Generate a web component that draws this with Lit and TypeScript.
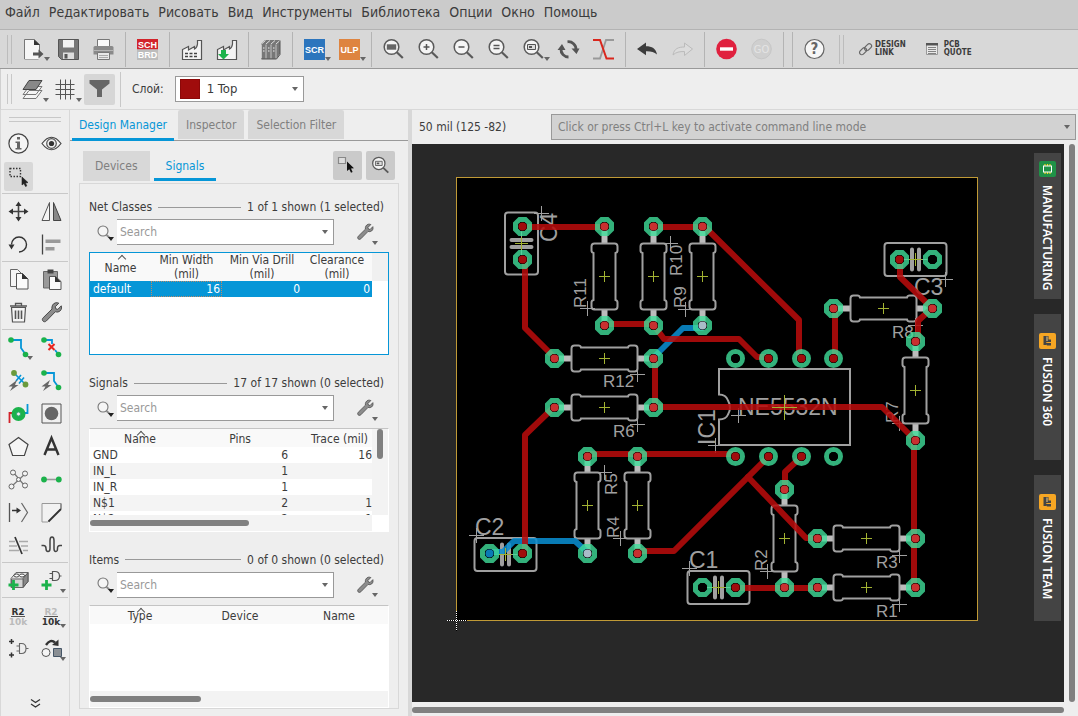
import { LitElement, html, svg, css, nothing, TemplateResult } from "lit";
import { customElement, property, state } from "lit/decorators.js";
import { classMap } from "lit/directives/class-map.js";

const GREEN = "#1bb24b";
const BLUE = "#0696d7";

const lens = (inner: TemplateResult | typeof nothing) => svg`
  <circle cx="10.5" cy="10" r="7.3" fill="#f4f4f4" stroke="#5a5a5a" stroke-width="1.5"/>
  <path d="M15.8 15.3l6 5.7" stroke="#5a5a5a" stroke-width="2.2"/>${inner}`;

const factory = svg`<path d="M3.500 22.500V12.500l6-3v3.500l6-3.500v2.500q2.500-1 3-5V3.500h4v19z" fill="#f4f4f4" stroke="#555" stroke-width="1.200"/>`;

const fWrench = svg`<path d="M19.800 3.200l-3.600 3.600.6 2 2 .6 3.500-3.600c.9 3-.6 5.600-3.300 6.200-.9.200-1.800 0-2.600-.3L7.300 21c-1 1-2.400 1-3.300.1s-.9-2.300.1-3.300L13 9c-.5-2.600.8-5.600 3.600-6.200 1.200-.2 2.200-.1 3.200.4z" fill="#8c8c8c" stroke="#4a4a4a" stroke-width="1"/>`;

const ICONS: Record<string, TemplateResult> = {
  open: svg`<path d="M3.500 2.500h10l5 5v10M3.500 2.500v19.500h14v-2" fill="none" stroke="#777"/><path d="M4 3h9.500l4.500 4.500V22H4z" fill="#f6f6f6"/><path d="M13 2.500v5.500h6z" fill="#333"/><path d="M12 15.500h5.500v-3l5 4.500-5 4.500v-3H12z" fill="#555"/>`,
  save: svg`<path d="M2.500 2.500h20v20h-17l-3-3z" fill="#777" stroke="#555"/><path d="M7 3h11v7.500H7z" fill="#f2f2f2"/><path d="M7 15.500h11v6.500H7z" fill="#ddd"/><path d="M8.500 17h3v4.500h-3z" fill="#555"/>`,
  print: svg`<path d="M6.500 2.500h12v8h-12z" fill="#fafafa" stroke="#777"/><path d="M2.500 10.500q0-1.500 1.500-1.500h17q1.500 0 1.500 1.500v7h-20z" fill="#8a8a8a"/><path d="M3 13.500h19" stroke="#b5b5b5"/><path d="M6.500 15.500h12v7h-12z" fill="#e8e8e8" stroke="#777"/><path d="M8 18.500h9M8 20.500h9" stroke="#aaa"/>`,
  schbrd: svg`<path d="M2 2h21v10.500H2z" fill="#d2232a"/><path d="M2 12.500h21V23H2z" fill="#bdbdbd"/><text x="12.500" y="10.800" text-anchor="middle" class="ib" fill="#fff">SCH</text><text x="12.500" y="21.300" text-anchor="middle" class="ib" fill="#fff">BRD</text>`,
  cam: svg`${factory}<path d="M6 16.500h12M6 19.500h12" stroke="#444" stroke-width="1.300" stroke-dasharray="3 1.500"/>`,
  camdown: svg`${factory}<path d="M7 13h5v4h3l-5.500 5.500L4 17h3z" fill="${GREEN}"/>`,
  library: svg`<path d="M3 7l4-4h15v14l-4 5H3z" fill="#777"/><path d="M3.500 7l4-3.500M8 7l4-3.500M13 7l4-3.500M18 7l4-3.500" stroke="#ddd"/><path d="M3.500 7.500v14M8 7.500v14M13 7.500v14M18 7.500v14" stroke="#c4c4c4"/><path d="M5 11h1.500M10 11h1.500M15 11h1.500M5 14h1.500M10 14h1.500M15 14h1.500" stroke="#eee"/><path d="M3.500 22h15l3.500-4.500V3.500" fill="none" stroke="#555"/>`,
  scr: svg`<path d="M2 2h21v21H2z" fill="#2c75bd"/><text x="12.500" y="16" text-anchor="middle" class="ib" fill="#fff">SCR</text>`,
  ulp: svg`<path d="M2 2h21v21H2z" fill="#de8440"/><text x="12.500" y="16" text-anchor="middle" class="ib" fill="#fff">ULP</text>`,
  zoomfit: lens(svg`<path d="M5.800 7.300h9.400v5.400H5.800z" fill="#666"/>`),
  zoomin: lens(svg`<path d="M7.500 10h6M10.500 7v6" stroke="#555" stroke-width="1.500"/>`),
  zoomout: lens(svg`<path d="M7.500 10h6" stroke="#555" stroke-width="1.500"/>`),
  zoomeq: lens(svg`<path d="M7.500 8.500h6M7.500 11.500h6" stroke="#555" stroke-width="1.400"/>`),
  zoomsel: lens(svg`<path d="M6.500 7.500h8v5h-8z" fill="#ddd" stroke="#555"/><path d="M8 9h3v2H8z" fill="#555"/>`),
  refresh: svg`<path d="M11.500 4.800A7.500 7.500 0 0 1 20 12.500M12.500 20A7.500 7.500 0 0 1 5 12" fill="none" stroke="#555" stroke-width="2.800"/><path d="M15.500 11.500h8l-3 5.500zM1.500 13h8L6 7z" fill="#555"/>`,
  airwire: svg`<path d="M2 21.500h7L15 3h8" fill="none" stroke="#999" stroke-width="1.800"/><path d="M2 3h7l6.500 18.500H23" fill="none" stroke="#d9261c" stroke-width="2"/>`,
  undo: svg`<path d="M2 12l9-6.500v3.800c6 0 9.800 2 11 8.200-3-2.700-6-3.300-11-3.200v4z" fill="#3c3c3c"/>`,
  redo: svg`<path d="M22.500 12l-8-6v4c-6 0-10.500 1.500-11.500 8 3-3 6.500-3.500 11.500-3.500v4z" fill="#dcdcdc" stroke="#bbb"/>`,
  stop: svg`<circle cx="12.500" cy="12" r="10.300" fill="#e0213f"/><path d="M6 12h13" stroke="#fff" stroke-width="3.400"/>`,
  go: svg`<circle cx="12.500" cy="12" r="9.800" fill="#cfcfcf" stroke="#c6c6c6"/><text x="12.500" y="16" text-anchor="middle" class="ig" fill="#e4e4e4">GO</text>`,
  help: svg`<circle cx="12.500" cy="12" r="9.500" fill="#f6f6f6" stroke="#666" stroke-width="1.200"/><text x="12.500" y="17.200" text-anchor="middle" class="iq" fill="#666">?</text>`,
  layers: svg`<path d="M9 13.500h13l-6 8H3zM9 9.500h13l-6 8H3z" fill="#f4f4f4" stroke="#777"/><path d="M9 3.500h13l-6 9H3z" fill="#888" stroke="#444"/>`,
  grid: svg`<path d="M2.500 7.500h19M2.500 12.500h19M2.500 17.500h19M7.500 2.500v20M12.500 2.500v20M17.500 2.500v20" stroke="#555" stroke-width="1"/>`,
  filter: svg`<path d="M2.500 3h20v3.500l-7.500 6V20h-5v-7.500l-7.500-6z" fill="#666"/>`,
  info: svg`<circle cx="12.500" cy="12.500" r="9.600" fill="#f5f5f5" stroke="#444" stroke-width="1.200"/><path d="M11 6h3v2.500h-3zM9.500 10.500H14v6.500h1.500v1.500H9.500V17H11v-5H9.500z" fill="#666"/>`,
  eye: svg`<path d="M3 12.500q9.500-12.500 19 0q-9.500 12.500-19 0z" fill="#f5f5f5" stroke="#444" stroke-width="1.200"/><circle cx="12.500" cy="12.500" r="4.800" fill="#eee" stroke="#555" stroke-width="1.200"/><circle cx="12.500" cy="12.500" r="2.600" fill="#333"/>`,
  group: svg`<path d="M4 4.500h10.500v8H4z" fill="none" stroke="#333" stroke-width="1.400" stroke-dasharray="1.500 1.500"/><path d="M16 13v8l2-1.500 1.500 3 1.300-.6-1.300-3 2.500-.3z" fill="#222" stroke="#222" stroke-width=".6"/>`,
  move: svg`<path d="M12.500 5v15M5 12.500h15" stroke="#444" stroke-width="1.600"/><path d="M12.500 2.500l3 4.500h-6zM12.500 22.500l3-4.500h-6zM2.500 12.500L7 9.500v6zM22.500 12.500L18 9.500v6z" fill="#333"/>`,
  mirror: svg`<path d="M10.500 3.500v18h-7.500z" fill="#f5f5f5" stroke="#555"/><path d="M14.500 3.500v18h7.500z" fill="#888" stroke="#444"/>`,
  rotate: svg`<path d="M5.500 12.500A7.500 7.500 0 1 1 13 20" fill="none" stroke="#333" stroke-width="1.400"/><path d="M2.500 12.500h6l-3 5z" fill="#333"/>`,
  align: svg`<path d="M3.500 2.500v20" stroke="#444" stroke-width="1.300"/><path d="M6.500 7.500h15v3.500h-15zM6.500 15h9v3.500h-9z" fill="#999"/>`,
  copy: svg`<path d="M4.500 2.500h7l5 5v12h-12z" fill="#f5f5f5" stroke="#666"/><path d="M10.500 6.500h6l5.500 5.500v10H10.500z" fill="#fafafa" stroke="#555"/><path d="M16 6l6 6h-6z" fill="#333"/>`,
  paste: svg`<path d="M4.500 4.500h14v16.500h-14z" fill="#999" stroke="#666"/><path d="M8.500 2.500h6v4h-6z" fill="#444"/><path d="M10.500 9.500h6l5.500 5v8H10.500z" fill="#fafafa" stroke="#555"/><path d="M16 9l6 6h-6z" fill="#333"/>`,
  trash: svg`<path d="M5.500 7.500h14l-1 14.500h-12z" fill="#f5f5f5" stroke="#555" stroke-width="1.200"/><path d="M4 6h17M9.500 5.500v-2h6v2" fill="none" stroke="#555" stroke-width="1.300"/><path d="M9.500 10.500v8.500M12.500 10.500v8.500M15.500 10.500v8.500" stroke="#555" stroke-width="1.600"/>`,
  wrench: fWrench,
  route: svg`<path d="M5 5h10v8l5 7" fill="none" stroke="${BLUE}" stroke-width="1.800"/><circle cx="5" cy="5" r="2.800" fill="${GREEN}"/><circle cx="19.500" cy="19.500" r="2.800" fill="${GREEN}"/>`,
  ripup: svg`<path d="M5 5h8v4M16 15l4 5" fill="none" stroke="${BLUE}" stroke-width="1.800"/><circle cx="5" cy="5" r="2.800" fill="${GREEN}"/><circle cx="19.500" cy="19.500" r="2.800" fill="${GREEN}"/><path d="M9.500 9l6 6M15.500 9l-6 6" stroke="#e8251f" stroke-width="2"/>`,
  quick: svg`<path d="M8 5l12 12" stroke="${BLUE}" stroke-width="1.600"/><path d="M10 13l5-6M13 15.500l5-6" stroke="${BLUE}" stroke-width="1.600"/><circle cx="8" cy="5" r="2.900" fill="#6a9a3c"/><circle cx="19.500" cy="16.500" r="2.900" fill="#6a9a3c"/><path d="M11 12l-8.500 6.500h4L4 23l8.500-6H9z" fill="#666"/>`,
  autor: svg`<path d="M5 5h10v8l5 7" fill="none" stroke="${BLUE}" stroke-width="1.800"/><circle cx="5" cy="5" r="2.800" fill="${GREEN}"/><circle cx="19.500" cy="19.500" r="2.800" fill="${GREEN}"/><path d="M11 12l-8.500 6.500h4L4 23l8.500-6H9z" fill="#666"/>`,
  via: svg`<path d="M3.500 22v-10h4" fill="none" stroke="#d2232a" stroke-width="1.800"/><path d="M21.500 3v9h-4" fill="none" stroke="${BLUE}" stroke-width="1.800"/><circle cx="12.500" cy="13" r="7" fill="${GREEN}"/><circle cx="12.500" cy="13" r="2" fill="#eee" stroke="#3a7"/>`,
  pad: svg`<path d="M3 3h19v19H3z" fill="#f0f0f0" stroke="#555"/><circle cx="12.500" cy="12.500" r="6.800" fill="#666"/>`,
  polygon: svg`<path d="M12.500 3.500l9.500 7-3.600 11H6.600L3 10.500z" fill="#f5f5f5" stroke="#444" stroke-width="1.200"/>`,
  text: svg`<path d="M5.500 21L12.500 4l7 17M8 15.500h9" fill="none" stroke="#333" stroke-width="2.400"/>`,
  ratsnest: svg`<path d="M7 5l11 13M19 7L6 19" stroke="#777" stroke-width="1.200"/><g fill="#f2f2f2" stroke="#666"><circle cx="7" cy="5.500" r="2.500"/><circle cx="19" cy="6.500" r="2.500"/><circle cx="5.500" cy="19.500" r="2.500"/><circle cx="19" cy="18.500" r="2.500"/><circle cx="12.500" cy="12.500" r="2"/></g>`,
  signal: svg`<path d="M5 12.500h15" stroke="#999" stroke-width="1.600"/><circle cx="5" cy="12.500" r="2.900" fill="${GREEN}"/><circle cx="19.800" cy="12.500" r="2.900" fill="${GREEN}"/>`,
  split: svg`<path d="M3.500 3v19" stroke="#555" stroke-width="1.300"/><path d="M15.500 3l6 9.500-6 9.500" fill="none" stroke="#666" stroke-width="1.200"/><path d="M6 10.500h6" stroke="#333" stroke-width="1.500"/><path d="M10.500 7.500l4.500 3-4.500 3z" fill="#333"/>`,
  miter: svg`<path d="M3 3.500h19v5l-13 13.500H3z" fill="#f2f2f2" stroke="#999"/><path d="M22 9L9.500 21.500" stroke="#333" stroke-width="1.800"/><path d="M22 9V3.500" stroke="#666"/>`,
  slice: svg`<path d="M3 8.500h6M13 8.500h9M3 13h8M15 13h7M3 17.500h10M17 17.500h5" stroke="#aaa" stroke-width="1.400"/><path d="M9 4l7 17" stroke="#333" stroke-width="1.700"/>`,
  meander: svg`<path d="M2.500 12.500h2q2.500 0 2.500 3t2 3 2-3V7.500q0-3.500 2-3.500t2 3.500v8q0 3 1.800 3t1.700-3 2.500-3h2" fill="none" stroke="#444" stroke-width="1.500"/>`,
  addpart: svg`<path d="M5 10.500l5-6h12v9l-5 6H5z" fill="#e4e4e4" stroke="#666"/><path d="M17 10.500l5-6v9l-5 6z" fill="#888" stroke="#555"/><path d="M5.500 11H17v8.500H5.500z" fill="#d4d4d4" stroke="#666"/><ellipse cx="10.500" cy="7.500" rx="2.500" ry="1.500" fill="#fff" stroke="#444"/><ellipse cx="16" cy="7.500" rx="2.500" ry="1.500" fill="#fff" stroke="#444"/><path d="M7.500 12v10M2.500 17h10" stroke="${GREEN}" stroke-width="2.800"/>`,
  addgate: svg`<path d="M13.500 3.500h2.500c3 0 4.500 2 4.500 4.500s-1.500 4.500-4.500 4.500h-2.500zM10.500 5.500h3M10.500 10.500h3M20.500 8h2" fill="none" stroke="#555" stroke-width="1.200"/><path d="M7.500 12v10M2.500 17h10" stroke="${GREEN}" stroke-width="2.800"/>`,
  name: svg`<text x="12" y="11.500" text-anchor="middle" class="ir" fill="#333">R2</text><path d="M5 13.500h14" stroke="#555"/><text x="12" y="22" text-anchor="middle" class="ir" fill="#bbb">10k</text>`,
  value: svg`<text x="12" y="11.500" text-anchor="middle" class="ir" fill="#bbb">R2</text><path d="M5 13.500h14" stroke="#555"/><text x="12" y="22" text-anchor="middle" class="ir" fill="#333">10k</text>`,
  invoke: svg`<path d="M5.500 3v5M3 5.500h5M5.500 16.500v5M3 19h5" stroke="#333" stroke-width="1.500"/><path d="M13.500 7.500h2c3 0 4.500 2 4.500 5s-1.500 5-4.500 5h-2zM10.500 10h3M10.500 15h3M20 12.500h2.500" fill="none" stroke="#666" stroke-width="1.100"/>`,
  replace: svg`<path d="M7 9q4.500-6.500 9-2.500" fill="none" stroke="#333" stroke-width="2.400"/><path d="M13 9l6.500 1V3.500z" fill="#333"/><circle cx="7" cy="16.500" r="4" fill="#f5f5f5" stroke="#555"/><path d="M14.500 12.500h8v8h-8z" fill="#8a8f94" stroke="#456"/>`,
  pick: svg`<path d="M3.500 4.500h7v6h-7z" fill="#ddd" stroke="#888" stroke-width="1.200"/><path d="M12 8.500v9.500l2.300-1.800 1.700 3.600 1.600-.8-1.600-3.500 3-.3z" fill="#111"/>`,
  small: svg`<circle cx="11" cy="11" r="5" fill="#f5f5f5" stroke="#777" stroke-width="1.100"/><path d="M14.500 15l4 3.500" stroke="#888" stroke-width="1.800"/>`,
};

const icon = (name: string, size = 25) => html`<svg class="ico" width=${size} height=${size} viewBox="0 0 25 25" aria-hidden="true">${ICONS[name]}</svg>`;

const iconText = css`
  .ico { display: block; overflow: visible; }
  .ib { font: bold 9px "Liberation Sans", sans-serif; }
  .ig { font: 11px "DejaVu Sans Condensed", "DejaVu Sans", sans-serif; }
  .iq { font: bold 15px "DejaVu Sans Condensed", "DejaVu Sans", sans-serif; }
  .ir { font: bold 9px "DejaVu Sans", sans-serif; }
`;

const base = css`
  * { box-sizing: border-box; }
  button, input, select {
    font: inherit; color: inherit; background: none; border: 0; padding: 0; margin: 0; border-radius: 0;
  }
  .caret::after {
    content: ""; position: absolute; right: 1px; bottom: 7px;
    border: 3px solid transparent; border-top: 4px solid #666; border-bottom: 0;
  }
`;

@customElement("main-toolbar")
export class MainToolbar extends LitElement {
  static styles = [base, iconText, css`
    :host { display: flex; align-items: stretch; height: 39px; background: #d8d8d8; border-bottom: 1px solid #999; }
    .grip { width: 16px; padding: 5px 4px 4px 7px; }
    .grip i { display: block; width: 5px; height: 100%; border: solid #bcbcbc; border-width: 0 1px; }
    .btn { position: relative; width: 35px; display: grid; place-items: center; }
    .sep { width: 9px; display: flex; justify-content: center; padding: 2px 0 1px; }
    .sep::before { content: ""; width: 1px; background: #b4b4b4; }
    .link { display: flex; align-items: center; gap: 2px; margin: 0 10px 0 10px; color: #3c3c3c;
      font: bold 8px/8px "DejaVu Sans Condensed", "DejaVu Sans", sans-serif; text-align: left; text-decoration: none; }
    .link span { display: grid; }
    .link + .link { gap: 6px; }
  `];
  private groups: string[][] = [
    ["open*", "save", "print"], ["schbrd"], ["cam", "camdown"], ["library"], ["scr*", "ulp*"],
    ["zoomfit", "zoomin", "zoomout", "zoomeq", "zoomsel*", "refresh", "airwire"],
    ["undo", "redo"], ["stop", "go"], [], ["help"],
  ];
  render() {
    return html`
      <span class="grip"><i></i></span>
      ${this.groups.map((g, i) => html`
        ${i ? html`<span class="sep"></span>` : nothing}
        ${g.map((n) => {
          const id = n.replace("*", "");
          return html`<button class=${classMap({ btn: true, caret: n !== id })} aria-label=${id}>${icon(id)}</button>`;
        })}`)}
      <span class="grip"><i></i></span>
      <a class="link" href="#link">
        <svg width="15" height="15" viewBox="0 0 15 15" fill="none" stroke="#666" stroke-width="1.200">
          <rect x="1" y="7" width="8" height="4.500" rx="2.200" transform="rotate(-45 5 9.200)"/>
          <rect x="6" y="3" width="8" height="4.500" rx="2.200" transform="rotate(-45 10 5.200)"/>
        </svg>
        <span><b>DESIGN</b><b>LINK</b></span>
      </a>
      <a class="link" href="#quote">
        <svg width="12" height="14" viewBox="0 0 12 14">
          <path d="M.5 1.500h11v11H.5z" fill="#e8e8e8" stroke="#999"/><path d="M0 1h12v2.500H0z" fill="#555"/>
          <path d="M2 5.500h8M2 7.500h8M2 9.500h8M2 11.500h8" stroke="#777" stroke-width=".9"/>
        </svg>
        <span><b>PCB</b><b>QUOTE</b></span>
      </a>`;
  }
}

@customElement("layer-toolbar")
export class LayerToolbar extends LitElement {
  static styles = [base, iconText, css`
    :host { display: flex; align-items: center; height: 41px; background: #eee; border-bottom: 1px solid #d8d8d8; border-left: 1px solid #d0d0d0; }
    .grip { width: 5px; height: 30px; margin: 0 4px 0 6px; border: solid #c8c8c8; border-width: 0 1px; }
    .btn { position: relative; width: 33px; height: 33px; display: grid; place-items: center; }
    .btn.caret::after { right: 0; bottom: 4px; }
    .on { width: 31px; height: 31px; background: #d6d6d6; border-radius: 2px; margin-left: 2px; }
    .sep { width: 1px; height: 35px; background: #c8c8c8; margin: 0 11px 0 5px; }
    .pick { position: relative; display: flex; align-items: center; width: 129px; height: 26px; margin-left: 11px;
      border: 1px solid #999; background: #fff; padding: 0 4px; gap: 3px; }
    .swatch { width: 20px; height: 20px; background: #a00c0c; border: 1px solid #8c0808; flex: none; }
    select { flex: 1; appearance: none; height: 100%; outline: 0; padding-left: 4px; font-size: 13px; }
    .pick.caret::after { right: 5px; bottom: 10px; }
  `];
  render() {
    return html`
      <span class="grip"></span>
      <button class="btn caret" aria-label="Layers">${icon("layers")}</button>
      <button class="btn caret" aria-label="Grid">${icon("grid")}</button>
      <button class="btn on" aria-label="Filter">${icon("filter")}</button>
      <span class="sep"></span>
      <label for="layer">Слой:</label>
      <span class="pick caret"><span class="swatch"></span>
        <select id="layer"><option>1 Top</option><option>16 Bottom</option></select>
      </span>`;
  }
}

@customElement("tool-palette")
export class ToolPalette extends LitElement {
  static styles = [base, iconText, css`
    :host { display: flex; flex-direction: column; align-items: center; width: 70px; background: #eee;
      border: solid #d8d8d8; border-width: 0 1px; }
    .grip { width: 52px; height: 5px; margin: 7px 0 5px; border: solid #c8c8c8; border-width: 1px 0; flex: none; }
    .set { display: grid; grid-template-columns: 33px 33px; flex: none; }
    .set + .set { border-top: 1px solid #c8c8c8; padding-top: 1px; }
    .btn { position: relative; height: 33px; display: grid; place-items: center; }
    .btn.caret::after { right: 2px; bottom: 4px; }
    .on { height: 29px; width: 29px; margin: 2px; background: #d8d8d8; border-radius: 2px; }
    .more { margin: auto 0 6px; }
    .more svg { display: block; }
  `];
  private sets: string[][] = [
    ["info", "eye", "group"], ["move", "mirror", "rotate", "align"], ["copy", "paste", "trash", "wrench"],
    ["route*", "ripup", "quick", "autor", "via", "pad", "polygon", "text", "ratsnest", "signal", "split", "miter", "slice", "meander"],
    ["addpart", "addgate*"], ["name", "value*", "invoke", "replace*"],
  ];
  render() {
    return html`<span class="grip"></span>
      ${this.sets.map((s) => html`<div class="set">${s.map((n) => {
        const id = n.replace("*", "");
        return html`<button class=${classMap({ btn: true, caret: n !== id, on: id === "group" })} aria-label=${id}>${icon(id)}</button>`;
      })}</div>`)}
      <button class="more" aria-label="More tools">
        <svg width="13" height="13" viewBox="0 0 13 13" fill="none" stroke="#333" stroke-width="1.300"><path d="M2 2.500l4.500 3 4.500-3M2 7l4.500 3L11 7"/></svg>
      </button>`;
  }
}

@customElement("list-section")
export class ListSection extends LitElement {
  @property() heading = "";
  @property() count = "";
  static styles = [base, iconText, css`
    :host { display: flex; flex-direction: column; flex: 1; min-height: 0; }
    .head { display: flex; align-items: center; gap: 6px; height: 16px; line-height: 16px; padding-right: 5px; flex: none; }
    .head i { flex: 1; height: 1px; background: #999; }
    .find { display: flex; align-items: center; margin: 4px 0 7px; height: 26px; flex: none; }
    .glass { position: relative; width: 28px; height: 25px; padding-left: 3px; }
    .box { position: relative; flex: 1; height: 26px; background: #fff; border: 1px solid #999; border-left: 0; display: flex; }
    input { width: 100%; padding-left: 3px; outline: 0; }
    input::placeholder { color: #999; opacity: 1; }
    .tool { position: relative; width: 55px; height: 25px; padding-left: 21px; }
    .box.caret::after { right: 5px; bottom: 10px; }
    .glass.caret::after { right: 3px; bottom: 4px; border-top-color: #222; }
    .tool.caret::after { right: 11px; bottom: 0; }
    .body { flex: 1; min-height: 0; display: flex; flex-direction: column; }
  `];
  render() {
    return html`
      <div class="head"><span>${this.heading}</span><i></i><span>${this.count}</span></div>
      <div class="find">
        <button class="glass caret" aria-label="Search options">${icon("small")}</button>
        <span class="box caret"><input type="text" placeholder="Search" aria-label="Search ${this.heading}"></span>
        <button class="tool caret" aria-label="Settings">${icon("wrench", 20)}</button>
      </div>
      <div class="body"><slot></slot></div>`;
  }
}

@customElement("design-panel")
export class DesignPanel extends LitElement {
  @state() private tab = "Design Manager";
  static styles = [base, iconText, css`
    :host { display: flex; flex-direction: column; width: 342px; background: #eee; border-right: 4px solid #d8d8d8; }
    .tabs { display: flex; gap: 4px; padding: 0 2px; border-bottom: 1px solid #999; height: 31px; flex: none; }
    .tab { padding: 0 8px; background: #d8d8d8; color: #808080; height: 29px; border-radius: 2px 2px 0 0; }
    .tab.on { background: none; color: #0696d7; border-bottom: 3px solid #0696d7; height: 31px; padding: 2px 7px 0; }
    .sub { display: flex; gap: 4px; padding: 10px 13px 2px; flex: none; }
    .sub .tab { height: 30px; padding: 0 12px; border-radius: 0; }
    .sub .tab.on { padding-top: 2px; }
    .sq { width: 29px; height: 29px; background: #cacaca; border-radius: 2px; display: grid; place-items: center; }
    .sub .push { margin-left: auto; }
    .group { flex: 1; min-height: 0; display: flex; flex-direction: column; gap: 20px; margin: 0 9px 7px; padding: 15px 9px 0;
      border: 1px solid #d8d8d8; }
    .list { flex: 1; min-height: 0; display: flex; flex-direction: column; background: #fff; border: 1px solid #fff; border-top-color: #c4c4c4; overflow: hidden; }
    .list.focus { border-color: #0696d7; }
    .rows { display: flex; flex: 1; min-height: 0; overflow: hidden; }
    .rows > table { flex: 1; min-width: 0; }
    .gutter { width: 16px; flex: none; background: #f0f0f0; }
    .focus .gutter { height: 28px; }
    table { border-collapse: collapse; table-layout: fixed; height: min-content; }
    th { position: relative; font-weight: normal; padding: 0; height: 18px; line-height: 14px; background: #f9f9f9; vertical-align: bottom; padding-bottom: 1px; }
    .tall th { height: 28px; padding: 0; vertical-align: middle; }
    th.sorted { padding-top: 2px; }
    th.sorted::before { content: ""; position: absolute; left: calc(50% - 2px); top: 3px; width: 5px; height: 5px;
      border: solid #555; border-width: 1px 0 0 1px; transform: rotate(45deg); }
    td { height: 16px; line-height: 16px; padding: 0 2px 0 3px; }
    td + td { text-align: right; }
    .sel td { background: #0696d7; color: #fff; }
    .sel td:nth-child(2) { outline: 1px dotted #b98a6a; outline-offset: -1px; }
    .striped tr:nth-child(even) td { background: #f4f4f4; }
    .striped td:last-child { padding-right: 0; }
    .striped th:last-child { padding-left: 17px; }
    .hbar { height: 16px; flex: none; display: flex; align-items: center; background: #f3f3f3; }
    .vbar { display: flex; justify-content: center; background: #f3f3f3; }
    .thumb { background: #808080; border-radius: 3px; }
    .hbar .thumb { height: 6px; width: 159px; }
    .hbar .thumb.short { width: 111px; }
    .hbar.inset { margin-right: 16px; }
    .vbar .thumb { width: 6px; height: 30px; }
    .c20 { width: 61px; } .c24 { width: 71px; } .c26 { width: 80px; } .c33 { width: 100px; }
  `];
  render() {
    const signals = [["GND", "6", "16"], ["IN_L", "1", ""], ["IN_R", "1", ""], ["N$1", "2", "1"], ["N$2", "2", "1"]];
    return html`
      <div class="tabs" role="tablist">
        ${["Design Manager", "Inspector", "Selection Filter"].map((t) => html`
          <button role="tab" class=${classMap({ tab: true, on: t === this.tab })} @click=${() => (this.tab = t)}>${t}</button>`)}
      </div>
      <div class="sub" role="tablist">
        <button role="tab" class="tab">Devices</button>
        <button role="tab" class="tab on">Signals</button>
        <button class="sq push" aria-label="Select">${icon("pick")}</button>
        <button class="sq" aria-label="Zoom to selection">${icon("zoomsel", 21)}</button>
      </div>
      <div class="group">
        <list-section heading="Net Classes" count="1 of 1 shown (1 selected)">
          <div class="list focus"><div class="rows">
            <table class="tall">
              <colgroup><col class="c20"><col class="c24"><col class="c26"><col></colgroup>
              <thead><tr><th class="sorted">Name</th><th>Min Width<br>(mil)</th><th>Min Via Drill<br>(mil)</th><th>Clearance<br>(mil)</th></tr></thead>
              <tbody><tr class="sel"><td>default</td><td>16</td><td>0</td><td>0</td></tr></tbody>
            </table><span class="gutter"></span>
          </div></div>
        </list-section>
        <list-section heading="Signals" count="17 of 17 shown (0 selected)">
          <div class="list"><div class="rows">
            <table class="striped">
              <colgroup><col class="c33"><col class="c33"><col></colgroup>
              <thead><tr><th class="sorted">Name</th><th>Pins</th><th>Trace (mil)</th></tr></thead>
              <tbody>${signals.map((r) => html`<tr>${r.map((c) => html`<td>${c}</td>`)}</tr>`)}</tbody>
            </table><span class="gutter vbar"><i class="thumb"></i></span>
          </div><div class="hbar inset"><i class="thumb"></i></div></div>
        </list-section>
        <list-section heading="Items" count="0 of 0 shown (0 selected)">
          <div class="list"><div class="rows">
            <table>
              <colgroup><col class="c33"><col class="c33"><col></colgroup>
              <thead><tr><th class="sorted">Type</th><th>Device</th><th>Name</th></tr></thead>
            </table>
          </div><div class="hbar"><i class="thumb short"></i></div></div>
        </list-section>
      </div>`;
  }
}

type Pt = [number, number];
type Part = { x: number; y: number; v?: boolean };

@customElement("board-view")
export class BoardView extends LitElement {
  static styles = [base, css`
    :host { position: relative; display: block; background: #282828; overflow: hidden; }
    .board { display: block; width: 100%; height: 100%; }
    .silk { fill: none; stroke: #a0a0a0; stroke-width: 2; }
    .thin { fill: none; stroke: #a0a0a0; stroke-width: 1; }
    .org { stroke: #a3b332; stroke-width: 1; }
    .lead { fill: #bcbcbc; }
    .plate { stroke: #a0a0a0; stroke-width: 4; stroke-linecap: round; }
    .lbl { fill: #a0a0a0; font: 17px "Liberation Sans", Arial, sans-serif; }
    .big { font-size: 23px; }
    .wire { fill: none; stroke-width: 6; stroke-linecap: round; stroke-linejoin: round; }
    .rail { position: absolute; top: 9px; right: 3px; display: flex; flex-direction: column; gap: 15px; }
    .dock { display: flex; align-items: center; gap: 8px; width: 27px; height: 146px; padding: 19px 0 0; background: #444;
      color: #fff; font: 600 12px/27px "Noto Sans", sans-serif; writing-mode: vertical-rl; }
    .dock.first { padding-top: 8px; }
    .dock svg { display: block; flex: none; }
  `];

  private resistors: Part[] = [
    { x: 604, y: 276, v: true }, { x: 653, y: 276, v: true }, { x: 702, y: 276, v: true },
    { x: 604, y: 358 }, { x: 604, y: 407 }, { x: 587, y: 505, v: true }, { x: 637, y: 505, v: true },
    { x: 883, y: 308 }, { x: 915, y: 390, v: true }, { x: 784, y: 538, v: true }, { x: 866, y: 538 }, { x: 866, y: 587 },
  ];
  private caps: Part[] = [{ x: 521, y: 243, v: true }, { x: 915, y: 259 }, { x: 505, y: 554 }, { x: 718, y: 587 }];
  private labels: [string, number, number, boolean, boolean][] = [
    ["R11", 586, 308, true, false], ["R10", 682, 276, true, false], ["R9", 686, 308, true, false],
    ["R12", 603, 387, false, false], ["R6", 613, 437, false, false], ["R5", 617, 495, true, false],
    ["R4", 619, 538, true, false], ["R8", 892, 338, false, false], ["R7", 898, 423, true, false],
    ["R2", 767, 571, true, false], ["R3", 876, 568, false, false], ["R1", 876, 617, false, false],
    ["C4", 557, 242, true, true], ["C2", 475, 535, false, true], ["C1", 689, 568, false, true],
    ["C3", 914, 295, false, true], ["IC1", 715, 445, true, true], ["NE5532N", 738, 415, false, true],
  ];
  private marks: Pt[] = [
    [587, 308], [670, 243], [685, 309], [637, 374], [637, 424], [604, 472], [620, 538], [541, 213], [476, 535],
    [689, 568], [945, 279], [915, 325], [899, 423], [715, 445], [767, 571], [899, 555], [899, 604], [738, 415],
  ];
  private top = [
    "M522 227H604", "M525 259V328L554 357", "M604 324H653L664 339H739L757 357H768", "M653 227H705L799 320V358",
    "M655 358V407", "M653 407H882L915 440", "M554 407L525 435V554", "M835 308V358",
    "M900 259V277L932 308L918 321V341", "M587 454H735", "M637 551H674L768 457", "M748 477L806 538H817",
    "M801 457L785 472V489", "M914 440V587", "M735 588H817",
  ];
  private bottom = ["M653 358L683 328H702", "M489 552H503L514 541H575L587 552"];
  // Pad centre, copper colour seen through the hole, and whether the pad is round.
  private pads: [number, number, string, boolean?][] = [
    [522, 226, "#a00c0c"], [522, 259, "#a00c0c"], [604, 226, "#c83030"], [604, 325, "#c83030"],
    [653, 226, "#c83030"], [653, 325, "#c83030"], [702, 226, "#c83030"], [702, 325, "#a9bcc8"],
    [554, 358, "#c83030"], [653, 358, "#c83030"], [554, 407, "#c83030"], [653, 407, "#c83030"],
    [735, 358, "", true], [768, 358, "#a00c0c", true], [801, 358, "#a00c0c", true], [833, 358, "#a00c0c", true],
    [735, 456, "#a00c0c", true], [768, 456, "#a00c0c", true], [801, 456, "#a00c0c", true], [833, 456, "", true],
    [899, 259, "#a00c0c"], [932, 259, ""], [833, 308, "#c83030"], [932, 308, "#c83030"],
    [915, 341, "#c83030"], [915, 440, "#c83030"], [587, 456, "#c83030"], [587, 553, "#a9bcc8"],
    [637, 456, "#c83030"], [637, 553, "#c83030"], [489, 553, "#0a7ab5"], [522, 553, "#a00c0c"],
    [784, 489, "#c83030"], [784, 587, "#c83030"], [817, 538, "#c83030"], [915, 538, "#c83030"],
    [817, 587, "#c83030"], [915, 587, "#c83030"], [702, 587, ""], [735, 587, "#a00c0c"],
  ];

  private place(p: Part) {
    return `translate(${p.x + 0.5} ${p.y + 0.5})${p.v ? " rotate(90)" : ""}`;
  }
  private cross(x: number, y: number, r: number, cls: string) {
    return svg`<path class=${cls} d=${`M${x - r} ${y + 0.5}h${2 * r + 1}M${x + 0.5} ${y - r}v${2 * r + 1}`}/>`;
  }

  render() {
    const badge = html`<svg width="17" height="16" viewBox="0 0 17 16"><rect width="17" height="16" rx="2" fill="#f6a623"/>
      <path d="M4.500 3v9h2.500V9h5V6.500H9.500V3H7v3.500V3z" fill="#444"/><path d="M5 9l3 3.500h4V10H8.500z" fill="#444"/><path d="M7 3.500h2v4.500H7z" fill="#9a8a6a"/></svg>`;
    return html`
      <svg class="board" viewBox="412 144 652 558" preserveAspectRatio="xMinYMin meet">
        <rect x="456.500" y="177.500" width="521" height="443" fill="#000" stroke="#c09a36"/>
        ${this.resistors.map((p) => svg`<g transform=${this.place(p)}>
          <path class="lead" d="M-50-3h17v6h-17zM33-3h17v6H33z"/>
          <path class="silk" d="M-33-10q0-3 3-3h4q2 0 2.500 2h47q.5-2 2.500-2h4q3 0 3 3v20q0 3-3 3h-4q-2 0-2.500-2h-47q-.5 2-2.500 2h-4q-3 0-3-3z"/>
        </g>`)}
        ${this.caps.map((p) => svg`<g transform=${this.place(p)}>
          <rect class="silk" x="-31" y="-16.500" width="62" height="33" rx="3"/>
          <path class="thin" d="M-12 0h8M4 0h8"/><path class="plate" d="M-3.500-10v20M3.500-10v20"/>
        </g>`)}
        <path class="silk" d="M719 369H850V445H719V419.500q7 0 9-5q4-7 0-14q-2-6-9-6z"/>
        ${this.labels.map(([t, x, y, v, big]) => svg`<text class=${big ? "lbl big" : "lbl"} transform=${`translate(${x} ${y})${v ? " rotate(-90)" : ""}`}>${t}</text>`)}
        ${this.marks.map(([x, y]) => this.cross(x, y, 7, "thin"))}
        <g opacity=".87" stroke="#098dd0">${this.bottom.map((d) => svg`<path class="wire" d=${d}/>`)}</g>
        <g opacity=".87" stroke="#b80c0c">${this.top.map((d) => svg`<path class="wire" d=${d}/>`)}</g>
        ${this.resistors.map((p) => this.cross(p.x, p.y, 5, "org"))}
        ${this.caps.map((p) => this.cross(p.x, p.y, 6, "org"))}
        ${this.cross(784, 407, 12, "org")}
        <g opacity=".8" fill="none" stroke="#40de9a" stroke-width="5">${this.pads.map(([x, y, , round]) => round
          ? svg`<circle cx=${x + 0.5} cy=${y + 0.5} r="7"/>`
          : svg`<path transform=${`translate(${x + 0.5} ${y + 0.5})`} d="M-2.900-7h5.800L7-2.900v5.800L2.900 7h-5.800L-7 2.900v-5.800z"/>`)}</g>
        ${this.pads.map(([x, y, dot]) => svg`<circle cx=${x + 0.5} cy=${y + 0.5} r="4.500" fill="#000"/>
          ${dot ? svg`<circle cx=${x + 0.5} cy=${y + 0.5} r="4" fill=${dot}/>` : nothing}`)}
        <path d="M447 620.500h20M456.500 611v20" stroke="#000" stroke-width="1"/>
        <path d="M447 620.500h20M456.500 611v20" stroke="#fff" stroke-width="1" stroke-dasharray="1 1"/>
      </svg>
      <div class="rail">
        <button class="dock first">
          <svg width="17" height="16" viewBox="0 0 17 16"><rect width="17" height="16" rx="2" fill="#1f9247"/>
            <path d="M6 3v10M8.500 3v10M11 3v10" stroke="#f4d21f" stroke-width="1.200"/><rect x="4.500" y="5" width="8" height="6" fill="#1f9247" stroke="#fff"/></svg>
          MANUFACTURING</button>
        <button class="dock">${badge}FUSION 360</button>
        <button class="dock">${badge}FUSION TEAM</button>
      </div>`;
  }
}

@customElement("app-root")
export class AppRoot extends LitElement {
  static styles = [base, css`
    :host { display: flex; flex-direction: column; height: 100vh; overflow: hidden; background: #eee; color: #3c3c3c;
      font: 12px/16px "DejaVu Sans Condensed", "DejaVu Sans", "Noto Sans", sans-serif; }
    .menu { display: flex; align-items: center; gap: 9px; height: 30px; padding: 0 5px 5px; background: #cbcbcb;
      border-bottom: 1px solid #b3b3b3; font-size: 14px; flex: none; }
    main-toolbar, layer-toolbar { flex: none; }
    .work { flex: 1; min-height: 0; display: flex; }
    .work > * { flex: none; }
    .work > .stage { flex: 1; min-width: 0; display: grid; grid-template: 34px minmax(0, 1fr) 14px / minmax(0, 1fr) 14px; }
    .cmd { grid-column: 1 / -1; display: flex; align-items: center; padding: 0 2px 0 7px; }
    .pos { width: 132px; }
    .line { position: relative; flex: 1; display: flex; height: 26px; background: #d2d2d2; border: 1px solid #999; }
    .line input { width: 100%; padding-left: 6px; outline: 0; }
    .line input::placeholder { color: #808080; opacity: 1; }
    .line.caret::after { right: 5px; bottom: 10px; }
    .v { width: 6px; margin: 0 0 0 5px; background: #808080; border-radius: 3px; }
    .h { height: 6px; margin-top: 5px; background: #808080; border-radius: 3px; }
  `];
  render() {
    return html`
      <nav class="menu">${["Файл", "Редактировать", "Рисовать", "Вид", "Инструменты", "Библиотека", "Опции", "Окно", "Помощь"]
        .map((m) => html`<button>${m}</button>`)}</nav>
      <main-toolbar></main-toolbar>
      <layer-toolbar></layer-toolbar>
      <div class="work">
        <tool-palette></tool-palette>
        <design-panel></design-panel>
        <div class="stage">
          <div class="cmd">
            <span class="pos">50 mil (125 -82)</span>
            <span class="line caret"><input type="text" aria-label="Command line" placeholder="Click or press Ctrl+L key to activate command line mode"></span>
          </div>
          <board-view></board-view>
          <span class="v"></span>
          <span class="h"></span>
        </div>
      </div>`;
  }
}
